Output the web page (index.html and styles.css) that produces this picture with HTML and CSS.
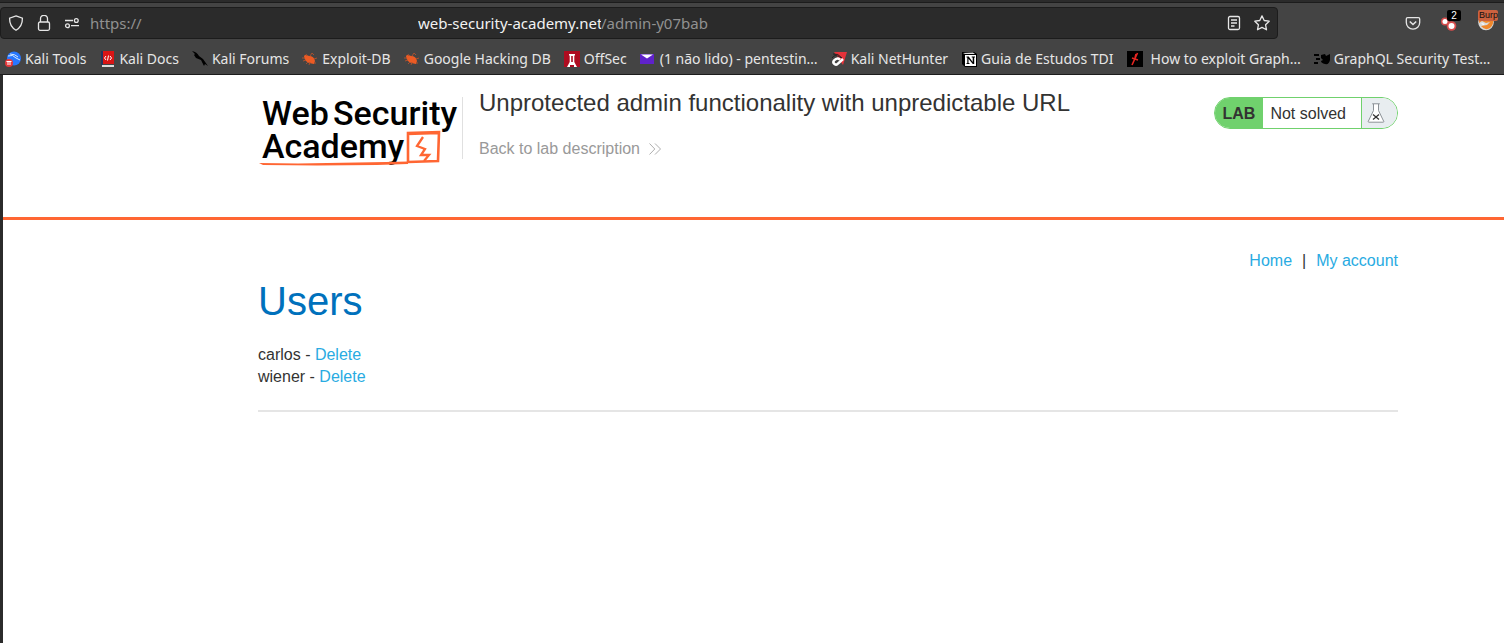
FILE: index.html
```html
<!DOCTYPE html>
<html lang="en">
<head>
<meta charset="utf-8">
<title>Unprotected admin functionality with unpredictable URL</title>
<link rel="stylesheet" href="styles.css">
</head>
<body>
<div class="browser">
  <div class="toolbar">
    <div class="urlbar">
      <button class="tool" aria-label="Tracking protection"><svg width="16" height="16" viewBox="0 0 16 16"><path d="M8 .9 14.4 3.200Q14.600 11.300 8 15.200 1.400 11.300 1.600 3.200Z"/></svg></button>
      <button class="tool" aria-label="Connection secure"><svg width="16" height="16" viewBox="0 0 16 16"><rect x="2.500" y="7" width="11" height="8.300" rx="1.500"/><path d="M4.500 7V3.800a3.500 3.500 0 0 1 7 0V7"/></svg></button>
      <button class="tool" aria-label="Permissions"><svg width="16" height="16" viewBox="0 0 16 16"><path d="M1 5.500h8M7 10.700h8"/><circle cx="12.300" cy="5.500" r="1.900"/><circle cx="3.500" cy="10.700" r="1.900"/></svg></button>
      <label class="scheme" for="address">https://</label>
      <input class="address" id="address" type="text" value="web-security-academy.net" spellcheck="false">
      <span class="path">/admin-y07bab</span>
      <button class="tool" aria-label="Reader view"><svg width="16" height="16" viewBox="0 0 16 16"><rect x="2.500" y="1.500" width="11" height="13" rx="1.500"/><path d="M5 5h6M5 8h6M5 11h3.500"/></svg></button>
      <button class="tool" aria-label="Bookmark this page"><svg width="16" height="16" viewBox="0 0 16 16"><path stroke-linejoin="round" d="m8 .9 2.200 4.600 5 .7-3.600 3.600.9 5L8 12.400l-4.500 2.400.9-5L.8 6.200l5-.7Z"/></svg></button>
    </div>
    <div class="extensions">
      <button class="tool" aria-label="Save to Pocket"><svg width="16" height="16" viewBox="0 0 16 16"><path d="M2.600 2.700h10.800q1.300 0 1.300 1.300v3.500a6.700 6.700 0 0 1-13.400 0V4q0-1.300 1.300-1.300Z"/><path stroke-width="1.600" d="m4.800 6.500 3.200 3 3.200-3"/></svg></button>
      <button class="tool" aria-label="Containers"><svg class="solid" width="16" height="16" viewBox="0 0 16 16"><circle cx="4" cy="6.500" r="4" fill="#d84c4c"/><circle cx="4" cy="6.500" r="2.500" fill="#fff"/><circle cx="10.500" cy="11" r="4.800" fill="#d84c4c"/><circle cx="10.500" cy="11" r="3" fill="#fff"/></svg><span class="badge">2</span></button>
      <button class="tool" aria-label="Proxy"><svg class="solid" width="16" height="16" viewBox="0 0 16 16"><circle cx="8" cy="7.500" r="7.800" fill="#d9d9d9"/><path fill="#f0872b" d="M1 4h14q1 6-3 9-5 3-9-2l6-1 3-3-4 1-4-2-3 2Z"/><path fill="#fff" d="m3 8 4 1-2 1Z"/></svg><span class="badge burp">Burp</span></button>
    </div>
  </div>
  <nav class="bookmarks" aria-label="Bookmarks">
    <a href="#"><svg width="16" height="16" viewBox="0 0 16 16"><circle cx="9" cy="7.500" r="7" fill="#2777ff"/><path d="M3 5q5-2 8 2l4 2M5 3q5 0 8 3" fill="none" stroke="#d9ecff"/><circle cx="4" cy="12" r="4" fill="#e5383b"/><path d="M1.500 10.500h5M3 11v3M5 11v3" stroke="#fff"/></svg>Kali Tools</a>
    <a href="#"><svg width="16" height="16" viewBox="0 0 16 16"><path fill="#24345c" d="M2 0h2v14H2z"/><path fill="#d91515" d="M4 0h11v13H4z"/><path fill="#ddd" d="M3 14h12v2H3z"/><path fill="none" stroke="#fff" d="M7 5 5.500 7 7 9M11 5l1.500 2L11 9M9.500 4.500l-1 5"/></svg>Kali Docs</a>
    <a href="#"><svg width="16" height="16" viewBox="0 0 16 16"><path d="M0 0q5 1 7 5l4 3 5 7-3-2-1 2-3-6-5-2-2-3 1-1Z"/></svg>Kali Forums</a>
    <a href="#"><svg width="16" height="16" viewBox="0 0 16 16"><g id="bug"><path d="M2 5q1-2 5 0 5 0 6 5l-1 3-5-1q-5-2-5-7Z" fill="#ec5b24"/><path d="m5 5-1-2M8 5l2-3 2 2M3 7H0M4 9l-3 1M6 11l-2 2M8 11l-1 3M12 8l3-1M12 12l2 0" fill="none" stroke="#a8502f"/></g></svg>Exploit-DB</a>
    <a href="#"><svg width="16" height="16" viewBox="0 0 16 16"><use href="#bug"/></svg>Google Hacking DB</a>
    <a href="#"><svg width="16" height="16" viewBox="0 0 16 16"><path fill="#ad0c20" d="M0 0h16v16H0z"/><path fill="#fff" d="M5 3h6v1.500h-.7V11l2.700 5h-3v-2H6v2H3l2.700-5V4.500H5Z"/><path fill="#ad0c20" d="M7.200 5h1.600v6H7.200z"/></svg>OffSec</a>
    <a href="#"><svg width="16" height="16" viewBox="0 0 16 16"><path fill="#5f22ca" d="M0 3h14v10H0z"/><path fill="#fff" d="M1 3.500h12L7 7.500Z"/></svg>(1 não lido) - pentestin…</a>
    <a href="#"><svg width="16" height="16" viewBox="0 0 16 16"><path fill="#e6323a" d="M3 1h13l-4 13Z"/><path d="M2 3q5-1 9 4M1 7q3-5 9 0" fill="none" stroke="#222"/><path d="M12 8 7 12.500a2.500 2.500 0 0 1-4-3Q6 6 9 8.500" fill="none" stroke="#fff" stroke-width="2.500"/></svg>Kali NetHunter</a>
    <a href="#"><svg width="16" height="16" viewBox="0 0 16 16"><path d="M1 1h12l3 2v13H4l-3-3Z"/><path fill="#fff" d="M4 4h11v11H4z"/><path fill="#ddd" d="m2 2 10-.5L14 3H4Z"/><path d="M5.500 5.500h2.200l4 5.500V6.500h-1v-1H14v1h-.8V13h-1.400L7.500 7.800V12h1v1h-3v-1h.8V6.500h-.8Z"/></svg>Guia de Estudos TDI</a>
    <a href="#" class="indented"><svg width="16" height="16" viewBox="0 0 16 16"><path d="M0 0h16v16H0z"/><path fill="none" stroke="#e52521" stroke-width="1.600" d="M10.500 2 5 14M5 7l6 2M9 3l-1 4"/></svg>How to exploit Graph…</a>
    <a href="#"><svg width="16" height="16" viewBox="0 0 16 16"><path d="M0 3h5v2H0zM2 7h4v2H2zM0 11h4v2H0zM7 4l4-1 1 2 4-2v6q-1 5-5 4-4-1-4-3l2-1-2-2Z"/></svg>GraphQL Security Test…</a>
  </nav>
</div>
<div class="page">
  <header class="lab-header">
    <a href="#" class="logo" aria-label="Web Security Academy"><svg width="200" height="70" viewBox="0 0 200 70"><g class="wordmark"><text x="4" y="28">Web</text><text x="75" y="28">Security</text><text x="4" y="61">Academy</text></g><path fill="none" stroke="#ff6633" stroke-width="2.600" d="M150 65V36l31-1-1 29-30 1M149 37l31-1"/><path fill="none" stroke="#ff6633" stroke-width="2.300" d="m165 40-6 9 8 3-4 6 8 0-5 6"/><path fill="#ff6633" d="M1 66 40 66.500l88-1.500 22-.5v2.500l-31 1-60 .5-54-.5Z"/></svg></a>
    <div class="title">
      <h2>Unprotected admin functionality with unpredictable URL</h2>
      <a href="#" class="back">Back to lab description <svg width="12" height="12" viewBox="0 0 12 12"><path fill="none" stroke="currentColor" stroke-width=".8" d="m.5.500 5.300 5.500-5.300 5.500M6 .500 11.500 6 6 11.500"/></svg></a>
    </div>
    <div class="status">
      <span class="lab">LAB</span>
      <span class="state">Not solved</span>
      <span class="flask"><svg width="18" height="20" viewBox="0 0 18 20"><path fill="#fff" stroke="#8b9196" d="M6.500 1v6.500L1.200 18.500q-.2.700.8.700h14q1 0 .8-.7L11.500 7.500V1M5.200.8h7.600"/><path stroke="#333" stroke-width="1.300" d="m6 11.500 6 5M12 11.500l-6 5"/></svg></span>
    </div>
  </header>
  <main class="content">
    <nav class="links"><a href="#">Home</a><span>|</span><a href="#">My account</a></nav>
    <h1>Users</h1>
    <div class="users">
      <div>carlos - <a href="#">Delete</a></div>
      <div>wiener - <a href="#">Delete</a></div>
    </div>
    <hr>
  </main>
</div>
</body>
</html>
```

FILE: styles.css
```css
* { box-sizing: border-box; }
body {
  margin: 0;
  min-height: 100vh;
  display: flex;
  flex-direction: column;
  background: #fff;
  color: #333332;
  font: 16px/22px "Liberation Sans", Arial, sans-serif;
}
a { color: #29abe2; text-decoration: none; }

.browser {
  background: #444;
  border-top: 2px solid #2b2b2b;
  border-bottom: 1px solid #1c1c1c;
  color: #e6e6e6;
  font: 15px/20px "Noto Sans", sans-serif;
}
.toolbar {
  display: flex;
  justify-content: space-between;
  border-top: 1px solid #1c1c1c;
  padding-top: 4px;
}
.urlbar {
  display: flex;
  align-items: center;
  flex: 0 1 1278px;
  height: 32px;
  padding: 0 7px;
  border: 1px solid #1c1c1c;
  border-radius: 4px;
  background: #2b2b2b;
}
.tool {
  position: relative;
  display: flex;
  flex: none;
  width: 16px;
  padding: 0;
  border: 0;
  background: none;
  margin-right: 12px;
}
.tool svg { fill: none; stroke: #e6e6e6; stroke-width: 1.300; }
.tool .solid { stroke: none; }
.tool:last-child { margin-right: 0; }
.scheme, .path { color: #919191; }
.scheme { flex: none; width: 328px; margin-left: -2px; }
.address {
  width: 183px;
  padding: 0;
  border: 0;
  outline: 0;
  background: none;
  color: #f2f2f2;
  font: inherit;
}
.path { flex: 1; }
.extensions { display: flex; align-items: center; gap: 20px; padding-right: 9px; }
.extensions .tool { margin: 0; }
.extensions .tool + .tool { width: 17px; }
.badge {
  position: absolute;
  left: 6px;
  top: -5px;
  width: 14px;
  height: 11px;
  border-radius: 2px;
  background: #000;
  color: #fff;
  font-size: 10px;
  line-height: 11px;
  text-align: center;
}
.badge.burp {
  left: 0;
  width: 20px;
  padding-left: 1px;
  overflow: hidden;
  background: #cc6240;
  color: #111;
  font-size: 9px;
  text-align: left;
}
.bookmarks {
  display: flex;
  gap: 13px;
  padding: 10px 2px 5px 5px;
  align-items: center;
  white-space: nowrap;
  font-size: 14px;
}
.bookmarks a { display: flex; align-items: center; gap: 4px; color: inherit; }
.bookmarks .indented { gap: 8px; }
.bookmarks svg { flex: none; }

.page { flex: 1; border-left: 3px solid #2b2b2b; }
.lab-header {
  display: flex;
  align-items: flex-start;
  padding: 22px 106px 50px 255px;
  border-bottom: 3px solid #ff6633;
}
.logo { display: flex; }
.logo svg { overflow: visible; }
.wordmark { font: 500 34px Roboto, sans-serif; }
.title {
  flex: 1;
  height: 62px;
  margin-left: 4px;
  padding-left: 16px;
  border-left: 1px solid #e0e0e0;
}
.title h2 { margin: -8px 0 21px; font-size: 24px; font-weight: 400; line-height: 28px; }
.back { display: flex; align-items: center; gap: 9px; color: #999; }
.status {
  display: flex;
  height: 32px;
  overflow: hidden;
  border: 1px solid #70d16d;
  border-radius: 16px;
  line-height: 32px;
}
.lab { padding: 0 8px; background: #70d16d; font-weight: 700; }
.state { padding: 0 15px 0 7px; }
.flask {
  display: flex;
  align-items: center;
  width: 36px;
  padding-left: 5px;
  border-left: 1px solid #70d16d;
  background: #e8edf0;
}
.content { padding: 30px 106px 0 255px; }
.links { display: flex; justify-content: flex-end; gap: 10px; }
h1 { margin: 6px 0 20px; color: #0071bc; font-size: 40px; font-weight: 400; line-height: 46px; }
.users { padding-bottom: 22px; }
hr { margin: 0; border: 0; border-top: 2px solid #e5e5e5; }
```
